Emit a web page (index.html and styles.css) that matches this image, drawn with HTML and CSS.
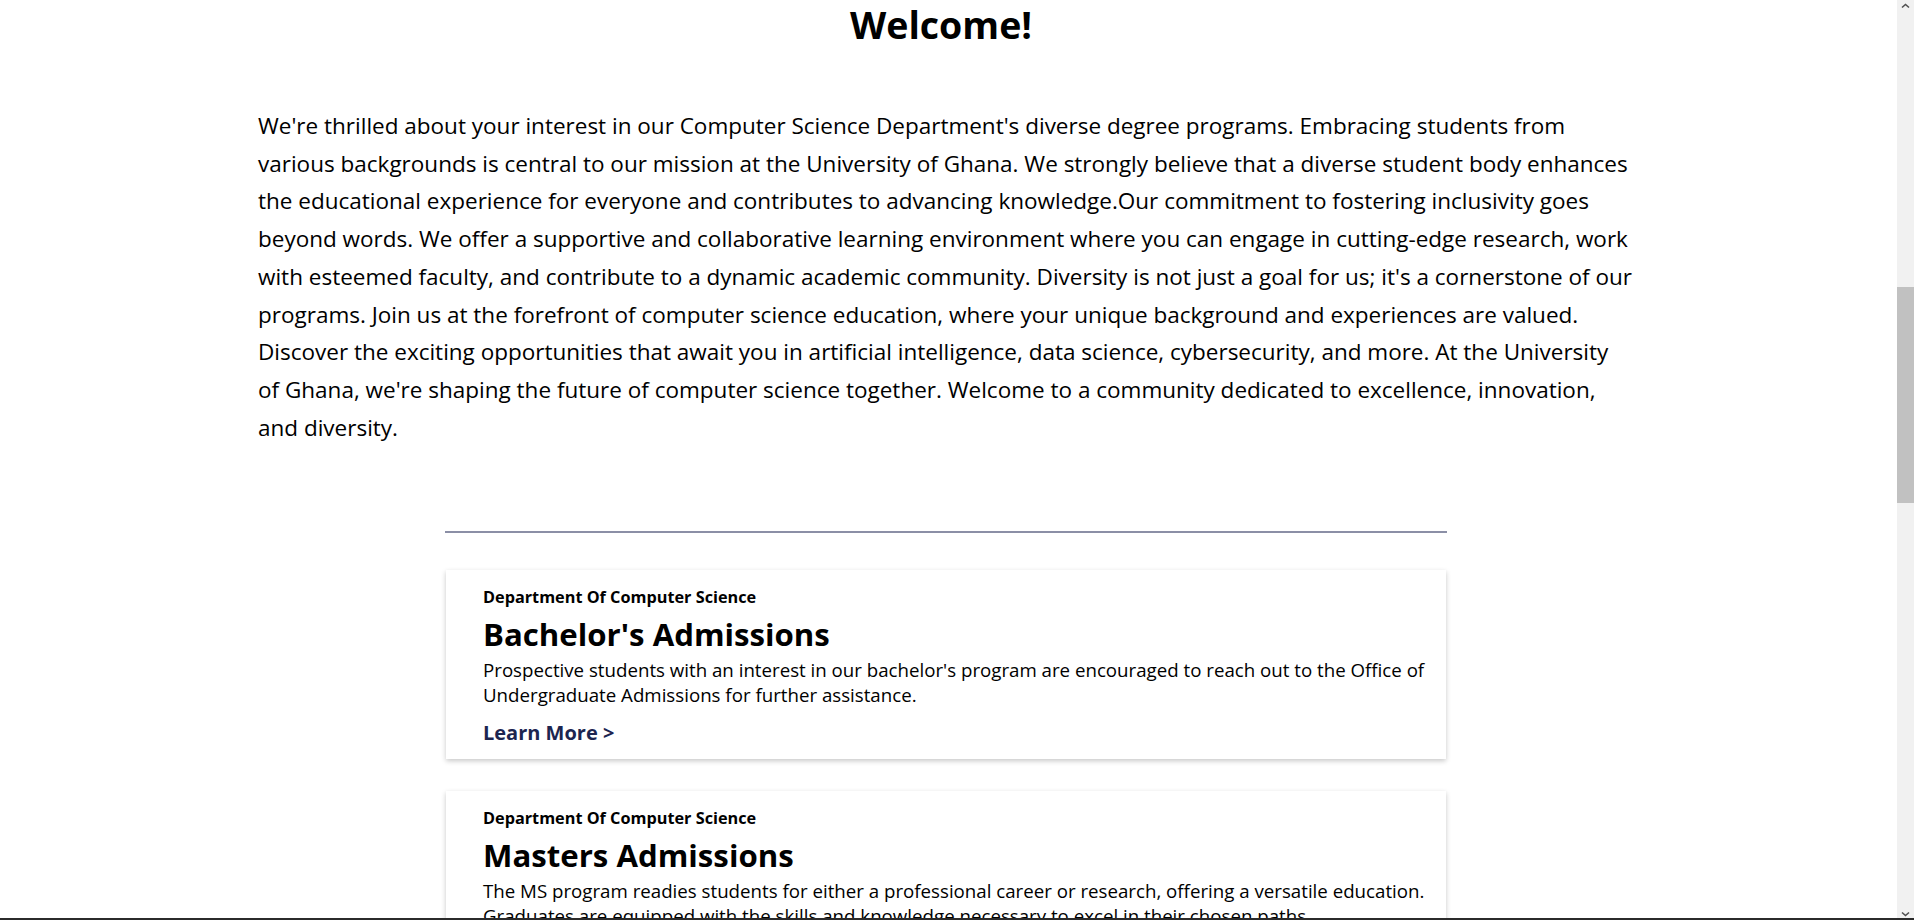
FILE: index.html
```html
<!DOCTYPE html>
<html lang="en">
<head>
<meta charset="utf-8">
<title>Computer Science Admissions</title>
<link rel="stylesheet" href="styles.css">
</head>
<body>
<div class="page">
  <section class="intro">
    <h1 class="welcome">Welcome!</h1>
    <p class="lead">We're thrilled about your interest in our Computer Science Department's diverse degree programs. Embracing students from various backgrounds is central to our mission at the University of Ghana. We strongly believe that a diverse student body enhances the educational experience for everyone and contributes to advancing knowledge.Our commitment to fostering inclusivity goes beyond words. We offer a supportive and collaborative learning environment where you can engage in cutting-edge research, work with esteemed faculty, and contribute to a dynamic academic community. Diversity is not just a goal for us; it's a cornerstone of our programs. Join us at the forefront of computer science education, where your unique background and experiences are valued. Discover the exciting opportunities that await you in artificial intelligence, data science, cybersecurity, and more. At the University of Ghana, we're shaping the future of computer science together. Welcome to a community dedicated to excellence, innovation, and diversity.</p>
  </section>
  <hr class="divider">
  <section class="programs">
    <article class="card">
      <div class="dept">Department Of Computer Science</div>
      <h2 class="title">Bachelor's Admissions</h2>
      <p class="desc">Prospective students with an interest in our bachelor's program are encouraged to reach out to the Office of Undergraduate Admissions for further assistance.</p>
      <a class="learn" href="#">Learn More &gt;</a>
    </article>
    <article class="card">
      <div class="dept">Department Of Computer Science</div>
      <h2 class="title">Masters Admissions</h2>
      <p class="desc">The MS program readies students for either a professional career or research, offering a versatile education. Graduates are equipped with the skills and knowledge necessary to excel in their chosen paths.</p>
      <a class="learn" href="#">Learn More &gt;</a>
    </article>
  </section>
</div>
<div class="scrollbar" aria-hidden="true">
  <svg class="arrow arrow-up" width="17" height="17" viewBox="0 0 17 17"><path d="M5 7.5 L8.5 4.5 L12 7.5" fill="none" stroke="#505050" stroke-width="1.6"/></svg>
  <div class="track"><div class="thumb"></div></div>
  <svg class="arrow arrow-down" width="17" height="17" viewBox="0 0 17 17"><path d="M5 9.5 L8.5 12.5 L12 9.5" fill="none" stroke="#505050" stroke-width="1.6"/></svg>
</div>
<div class="window-edge" aria-hidden="true"></div>
</body>
</html>
```

FILE: styles.css
```css
html, body {
  margin: 0;
  padding: 0;
  background: #ffffff;
}

body {
  font-family: "Open Sans", "Noto Sans", sans-serif;
  color: #000000;
}

.page {
  display: flex;
  flex-direction: column;
  padding-top: 1px;
}

.intro {
  padding: 0 276px 0 258px;
}

.welcome {
  margin: -1px 0 0 0;
  padding-right: 14px;
  font-size: 37.5px;
  line-height: 49px;
  font-weight: 700;
  text-align: center;
}

.lead {
  margin: 58px 0 0 0;
  max-width: 1376px;
  font-size: 22.5px;
  line-height: 37.7px;
  font-weight: 400;
}

.divider {
  margin: 85px 0 0 445px;
  width: 1002px;
  height: 2px;
  border: none;
  background: #8b8fa6;
}

.programs {
  margin: 37px 0 0 446px;
  width: 1000px;
  display: flex;
  flex-direction: column;
  gap: 32px;
}

.card {
  background: #ffffff;
  padding: 16px 12px 13px 37px;
  box-shadow: 0 2px 5px rgba(0, 0, 0, 0.22);
  display: flex;
  flex-direction: column;
  align-items: flex-start;
}

.dept {
  font-size: 16.25px;
  line-height: 22px;
  font-weight: 700;
}

.title {
  margin: 4px 0 0 0;
  font-size: 31.2px;
  line-height: 44px;
  font-weight: 700;
}

.desc {
  margin: 1px 0 0 0;
  font-size: 18.7px;
  line-height: 25px;
}

.learn {
  margin-top: 12px;
  font-size: 20px;
  line-height: 27px;
  font-weight: 700;
  color: #1c2550;
  text-decoration: none;
}

.scrollbar {
  position: fixed;
  top: 0;
  right: 0;
  width: 17px;
  height: 100vh;
  background: #f1f1f1;
  display: flex;
  flex-direction: column;
}

.arrow {
  display: block;
  flex: none;
}

.track {
  flex: 1;
  padding-top: 270px;
}

.thumb {
  height: 216px;
  background: #c1c1c1;
}

.window-edge {
  position: fixed;
  left: 0;
  right: 0;
  bottom: 0;
  height: 2px;
  background: #2b2b2b;
  z-index: 2;
}
```
